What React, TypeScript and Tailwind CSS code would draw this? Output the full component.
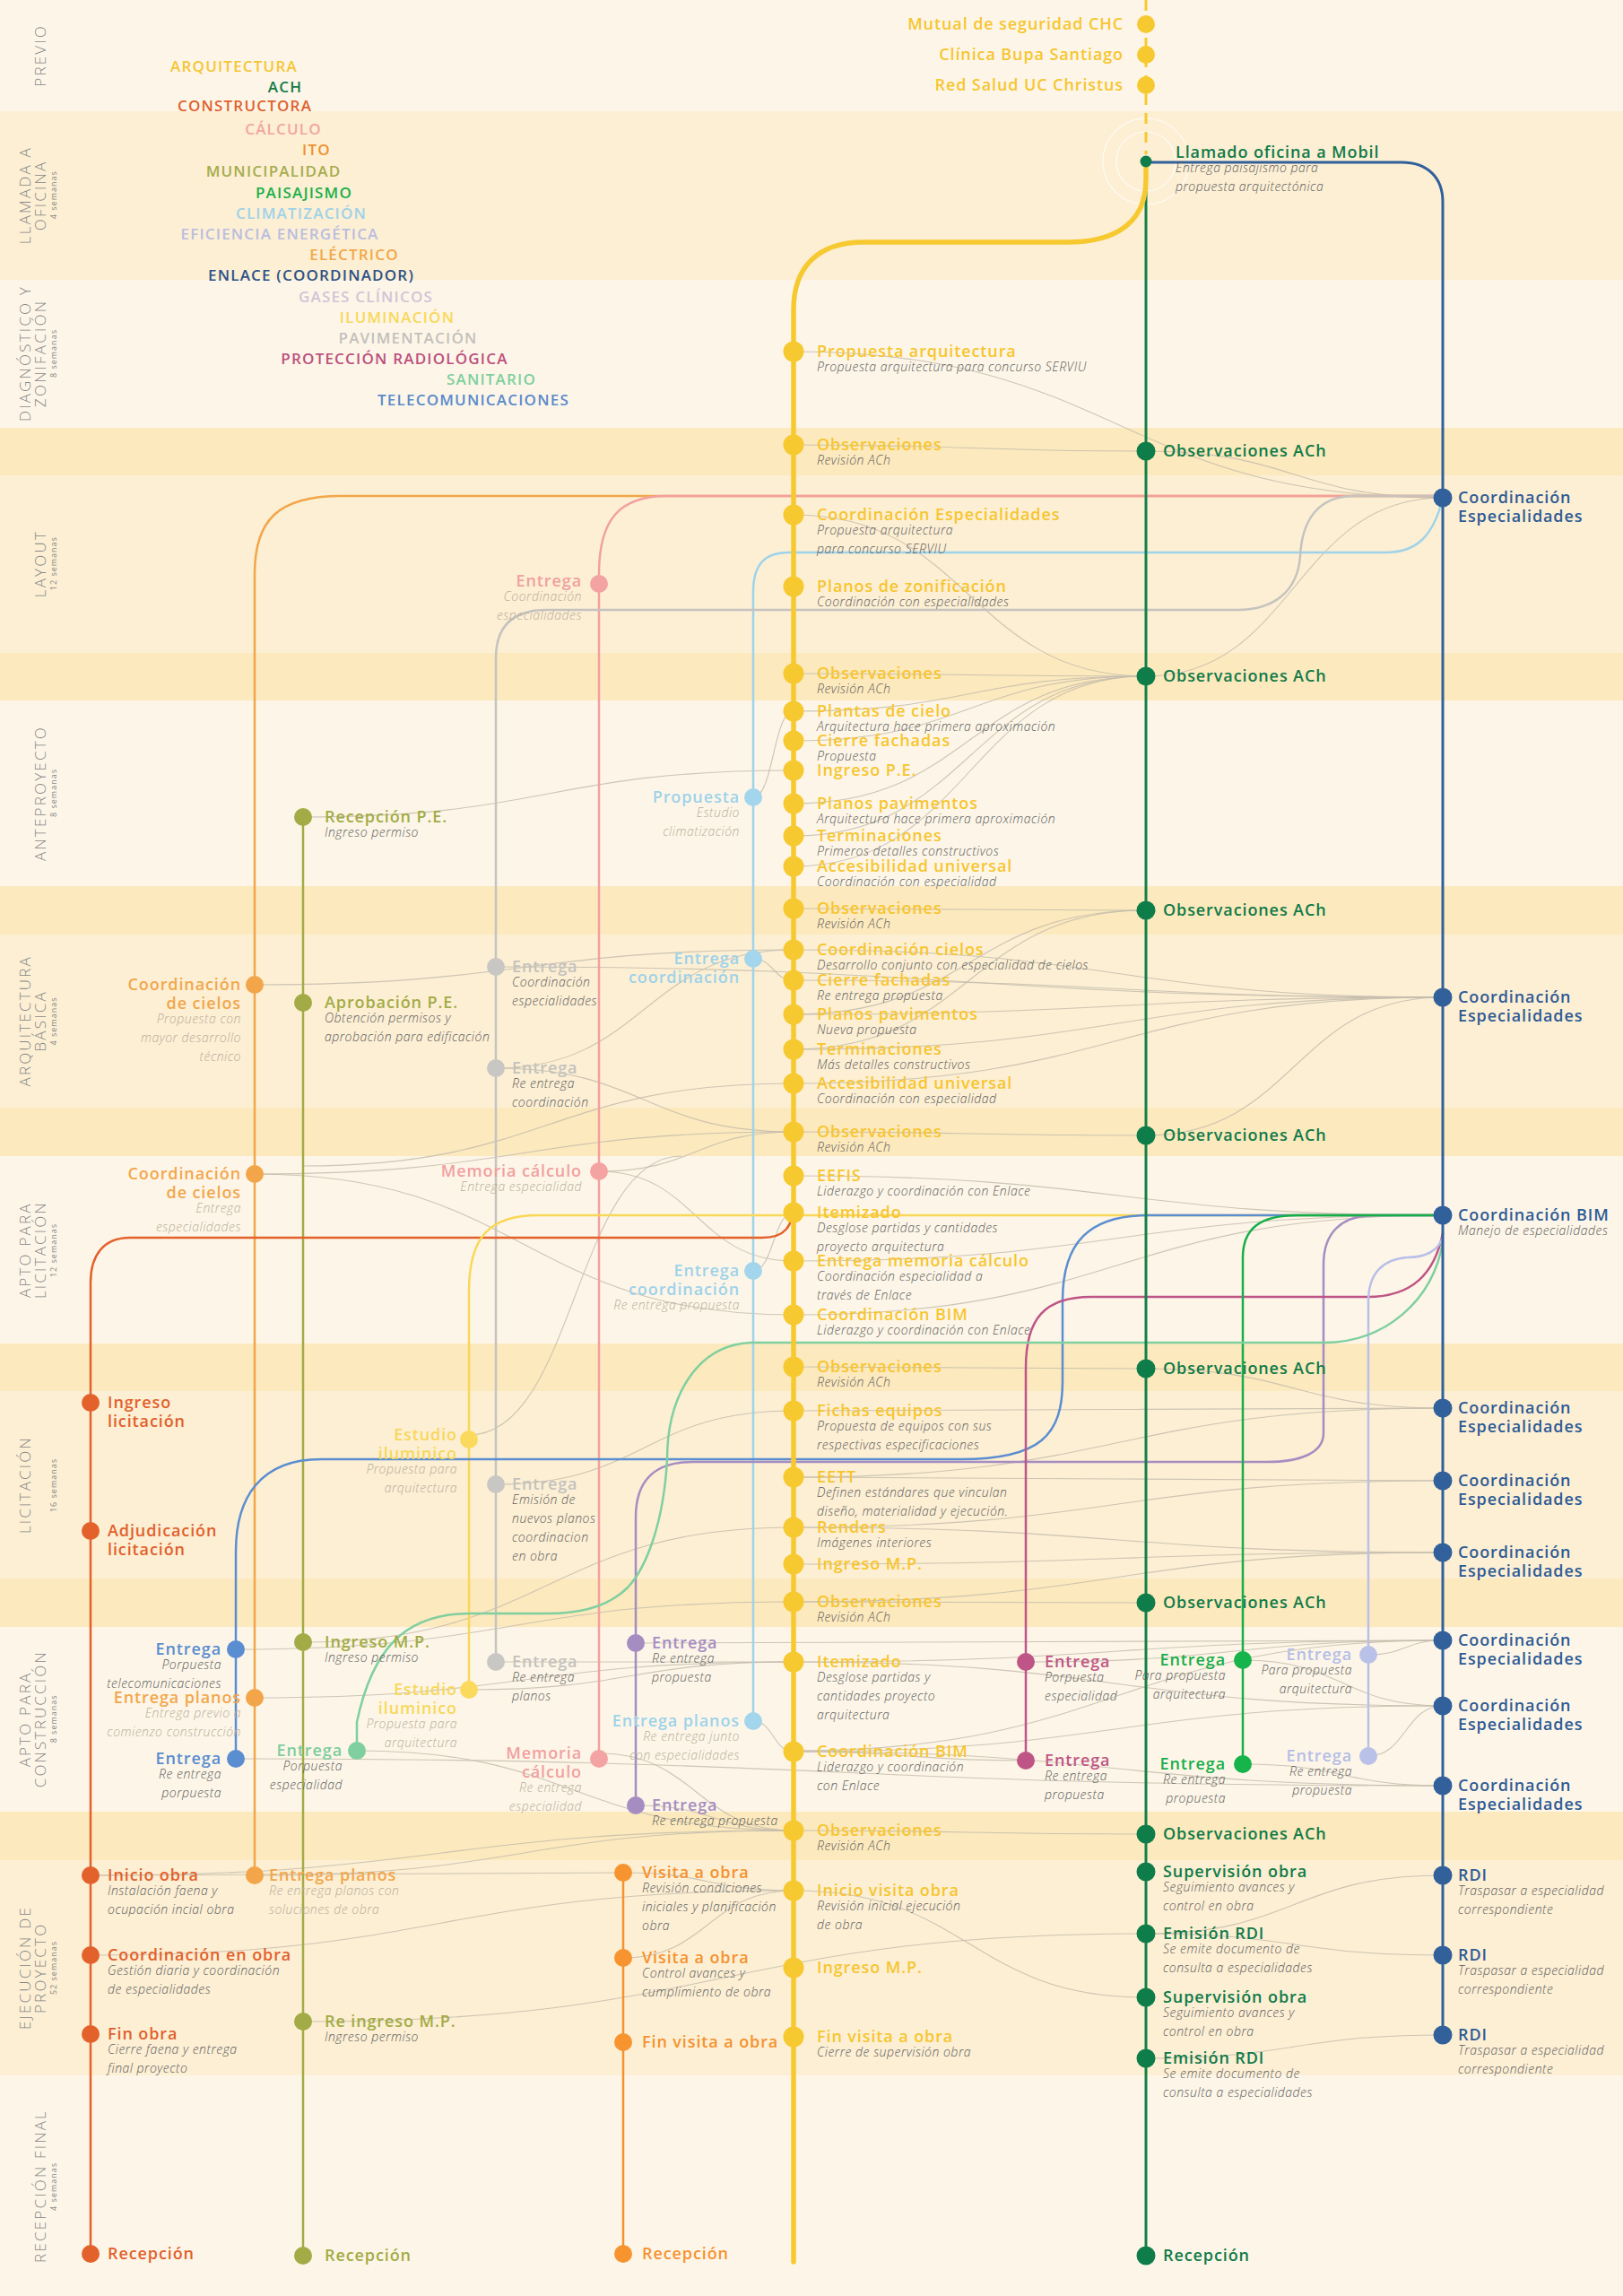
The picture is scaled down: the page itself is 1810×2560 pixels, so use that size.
import React from 'react';

type Band = { h: string; bg: string; label?: string[]; sub?: string };
type Lab = { x: number; y: number; t: string; s?: string; c: string; sc?: string; r?: boolean };

const LIGHT = 'bg-[#fdf6e8]';
const MID = 'bg-[#fcefd4]';
const DARK = 'bg-[#fce9bd]';

const BANDS: Band[] = [
  { h: 'h-[124px]', bg: LIGHT, label: ['PREVIO'] },
  { h: 'h-[188px]', bg: MID, label: ['LLAMADA A', 'OFICINA'], sub: '4 semanas' },
  { h: 'h-[165px]', bg: LIGHT, label: ['DIAGNÓSTICO Y', 'ZONIFACIÓN'], sub: '8 semanas' },
  { h: 'h-[53px]', bg: DARK },
  { h: 'h-[198px]', bg: MID, label: ['LAYOUT'], sub: '12 semanas' },
  { h: 'h-[53px]', bg: DARK },
  { h: 'h-[207px]', bg: LIGHT, label: ['ANTEPROYECTO'], sub: '8 semanas' },
  { h: 'h-[54px]', bg: DARK },
  { h: 'h-[193px]', bg: MID, label: ['ARQUITECTURA', 'BÁSICA'], sub: '4 semanas' },
  { h: 'h-[54px]', bg: DARK },
  { h: 'h-[209px]', bg: LIGHT, label: ['APTO PARA', 'LICITACIÓN'], sub: '12 semanas' },
  { h: 'h-[53px]', bg: DARK },
  { h: 'h-[209px]', bg: MID, label: ['LICITACIÓN', '\u00a0'], sub: '16 semanas' },
  { h: 'h-[54px]', bg: DARK },
  { h: 'h-[206px]', bg: LIGHT, label: ['APTO PARA', 'CONSTRUCCIÓN'], sub: '8 semanas' },
  { h: 'h-[54px]', bg: DARK },
  { h: 'h-[240px]', bg: MID, label: ['EJECUCIÓN DE', 'PROYECTO'], sub: '52 semanas' },
  { h: 'h-[246px]', bg: LIGHT, label: ['RECEPCIÓN FINAL'], sub: '4 semanas' },
];

const LEGEND: [string, number, number, string][] = [
  ['ARQUITECTURA', 261, 74, 'text-[#f6c535]'],
  ['ACH', 318, 97, 'text-[#137a47]'],
  ['CONSTRUCTORA', 273, 118, 'text-[#e0612c]'],
  ['CÁLCULO', 316, 144, 'text-[#f2a5a0]'],
  ['ITO', 353, 167, 'text-[#f0912f]'],
  ['MUNICIPALIDAD', 305, 191, 'text-[#a6ac4d]'],
  ['PAISAJISMO', 339, 215, 'text-[#1aaf4b]'],
  ['CLIMATIZACIÓN', 336, 238, 'text-[#9fd2e8]'],
  ['EFICIENCIA ENERGÉTICA', 312, 261, 'text-[#b9bde0]'],
  ['ELÉCTRICO', 395, 284, 'text-[#f2a748]'],
  ['ENLACE (COORDINADOR)', 347, 307, 'text-[#2c5287]'],
  ['GASES CLÍNICOS', 408, 331, 'text-[#d3c4d6]'],
  ['ILUMINACIÓN', 443, 354, 'text-[#f9d85b]'],
  ['PAVIMENTACIÓN', 455, 377, 'text-[#c3c0bb]'],
  ['PROTECCIÓN RADIOLÓGICA', 440, 400, 'text-[#bc4f7e]'],
  ['SANITARIO', 548, 423, 'text-[#7dcf9e]'],
  ['TELECOMUNICACIONES', 528, 446, 'text-[#5a8acb]'],
];

const Y = 'text-[#f7c52f]';
const G = 'text-[#107a48]';
const B = 'text-[#2f5b94]';
const LT = 'text-[#b9ad9b]';

const yellowNodes: [number, string, string?][] = [
  [392, 'Propuesta arquitectura', 'Propuesta arquitectura para concurso SERVIU'],
  [496, 'Observaciones', 'Revisión ACh'],
  [574, 'Coordinación Especialidades', 'Propuesta arquitectura|para concurso SERVIU'],
  [654, 'Planos de zonificación', 'Coordinación con especialidades'],
  [751, 'Observaciones', 'Revisión ACh'],
  [793, 'Plantas de cielo', 'Arquitectura hace primera aproximación'],
  [826, 'Cierre fachadas', 'Propuesta'],
  [859, 'Ingreso P.E.'],
  [896, 'Planos pavimentos', 'Arquitectura hace primera aproximación'],
  [932, 'Terminaciones', 'Primeros detalles constructivos'],
  [966, 'Accesibilidad universal', 'Coordinación con especialidad'],
  [1013, 'Observaciones', 'Revisión ACh'],
  [1059, 'Coordinación cielos', 'Desarrollo conjunto con especialidad de cielos'],
  [1093, 'Cierre fachadas', 'Re entrega propuesta'],
  [1131, 'Planos pavimentos', 'Nueva propuesta'],
  [1170, 'Terminaciones', 'Más detalles constructivos'],
  [1208, 'Accesibilidad universal', 'Coordinación con especialidad'],
  [1262, 'Observaciones', 'Revisión ACh'],
  [1311, 'EEFIS', 'Liderazgo y coordinación con Enlace'],
  [1352, 'Itemizado', 'Desglose partidas y cantidades|proyecto arquitectura'],
  [1406, 'Entrega memoria cálculo', 'Coordinación especialidad a|través de Enlace'],
  [1466, 'Coordinación BIM', 'Liderazgo y coordinación con Enlace'],
  [1524, 'Observaciones', 'Revisión ACh'],
  [1573, 'Fichas equipos', 'Propuesta de equipos con sus|respectivas especificaciones'],
  [1647, 'EETT', 'Definen estándares que vinculan|diseño, materialidad y ejecución.'],
  [1703, 'Renders', 'Imágenes interiores'],
  [1744, 'Ingreso M.P.'],
  [1786, 'Observaciones', 'Revisión ACh'],
  [1853, 'Itemizado', 'Desglose partidas y|cantidades proyecto|arquitectura'],
  [1953, 'Coordinación BIM', 'Liderazgo y coordinación|con Enlace'],
  [2041, 'Observaciones', 'Revisión ACh'],
  [2108, 'Inicio visita obra', 'Revisión inicial ejecución|de obra'],
  [2194, 'Ingreso M.P.'],
  [2271, 'Fin visita a obra', 'Cierre de supervisión obra'],
];

const achNodes: [number, string, string?][] = [
  [503, 'Observaciones ACh'],
  [754, 'Observaciones ACh'],
  [1015, 'Observaciones ACh'],
  [1266, 'Observaciones ACh'],
  [1526, 'Observaciones ACh'],
  [1787, 'Observaciones ACh'],
  [2045, 'Observaciones ACh'],
  [2087, 'Supervisión obra', 'Seguimiento avances y|control en obra'],
  [2156, 'Emisión RDI', 'Se emite documento de|consulta a especialidades'],
  [2227, 'Supervisión obra', 'Seguimiento avances y|control en obra'],
  [2295, 'Emisión RDI', 'Se emite documento de|consulta a especialidades'],
  [2515, 'Recepción'],
];

const CE = 'Coordinación\nEspecialidades';
const enlaceNodes: [number, string, string?][] = [
  [555, CE], [1112, CE], [1355, 'Coordinación BIM', 'Manejo de especialidades'],
  [1570, CE], [1651, CE], [1731, CE], [1829, CE], [1902, CE], [1991, CE],
  [2091, 'RDI', 'Traspasar a especialidad|correspondiente'],
  [2180, 'RDI', 'Traspasar a especialidad|correspondiente'],
  [2269, 'RDI', 'Traspasar a especialidad|correspondiente'],
];

const LABELS: Lab[] = [
  ...yellowNodes.map(([y, t, s]) => ({ x: 911, y, t, s, c: Y })),
  ...achNodes.map(([y, t, s]) => ({ x: 1297, y, t, s, c: G })),
  ...enlaceNodes.map(([y, t, s]) => ({ x: 1626, y, t, s, c: B })),
  { x: 1253, y: 27, t: 'Mutual de seguridad CHC', c: Y, r: true },
  { x: 1253, y: 61, t: 'Clínica Bupa Santiago', c: Y, r: true },
  { x: 1253, y: 95, t: 'Red Salud UC Christus', c: Y, r: true },
  { x: 1311, y: 170, t: 'Llamado oficina a Mobil', s: 'Entrega paisajismo para|propuesta arquitectónica', c: G },
  // constructora
  { x: 120, y: 1564, t: 'Ingreso\nlicitación', c: 'text-[#e2602b]' },
  { x: 120, y: 1707, t: 'Adjudicación\nlicitación', c: 'text-[#e2602b]' },
  { x: 120, y: 2091, t: 'Inicio obra', s: 'Instalación faena y|ocupación incial obra', c: 'text-[#e2602b]' },
  { x: 120, y: 2180, t: 'Coordinación en obra', s: 'Gestión diaria y coordinación|de especialidades', c: 'text-[#e2602b]' },
  { x: 120, y: 2268, t: 'Fin obra', s: 'Cierre faena y entrega|final proyecto', c: 'text-[#e2602b]' },
  { x: 120, y: 2513, t: 'Recepción', c: 'text-[#e2602b]' },
  // eléctrico
  { x: 269, y: 1098, t: 'Coordinación\nde cielos', s: 'Propuesta con|mayor desarrollo|técnico', c: 'text-[#f2a64c]', sc: LT, r: true },
  { x: 269, y: 1309, t: 'Coordinación\nde cielos', s: 'Entrega|especialidades', c: 'text-[#f2a64c]', sc: LT, r: true },
  { x: 269, y: 1893, t: 'Entrega planos', s: 'Entrega previo a|comienzo construcción', c: 'text-[#f2a64c]', sc: LT, r: true },
  { x: 300, y: 2091, t: 'Entrega planos', s: 'Re entrega planos con|soluciones de obra', c: 'text-[#f2a64c]', sc: LT },
  // municipalidad
  { x: 362, y: 911, t: 'Recepción P.E.', s: 'Ingreso permiso', c: 'text-[#a2ab45]' },
  { x: 362, y: 1118, t: 'Aprobación P.E.', s: 'Obtención permisos y|aprobación para edificación', c: 'text-[#a2ab45]' },
  { x: 362, y: 1831, t: 'Ingreso M.P.', s: 'Ingreso permiso', c: 'text-[#a2ab45]' },
  { x: 362, y: 2254, t: 'Re ingreso M.P.', s: 'Ingreso permiso', c: 'text-[#a2ab45]' },
  { x: 362, y: 2515, t: 'Recepción', c: 'text-[#a2ab45]' },
  // telecomunicaciones
  { x: 247, y: 1839, t: 'Entrega', s: 'Porpuesta|telecomunicaciones', c: 'text-[#5a8dd0]', r: true },
  { x: 247, y: 1961, t: 'Entrega', s: 'Re entrega|porpuesta', c: 'text-[#5a8dd0]', r: true },
  // pavimentación
  { x: 571, y: 1078, t: 'Entrega', s: 'Coordinación|especialidades', c: 'text-[#c4c2bd]' },
  { x: 571, y: 1191, t: 'Entrega', s: 'Re entrega|coordinación', c: 'text-[#c4c2bd]' },
  { x: 571, y: 1655, t: 'Entrega', s: 'Emisión de|nuevos planos|coordinacion|en obra', c: 'text-[#c4c2bd]' },
  { x: 571, y: 1853, t: 'Entrega', s: 'Re entrega|planos', c: 'text-[#c4c2bd]' },
  // cálculo
  { x: 649, y: 648, t: 'Entrega', s: 'Coordinación|especialidades', c: 'text-[#f1a0a0]', sc: LT, r: true },
  { x: 649, y: 1306, t: 'Memoria cálculo', s: 'Entrega especialidad', c: 'text-[#f1a0a0]', sc: LT, r: true },
  { x: 649, y: 1955, t: 'Memoria\ncálculo', s: 'Re entrega|especialidad', c: 'text-[#f1a0a0]', sc: LT, r: true },
  // iluminación
  { x: 510, y: 1600, t: 'Estudio\niluminico', s: 'Propuesta para|arquitectura', c: 'text-[#f8d75a]', sc: LT, r: true },
  { x: 510, y: 1884, t: 'Estudio\niluminico', s: 'Propuesta para|arquitectura', c: 'text-[#f8d75a]', sc: LT, r: true },
  // climatización
  { x: 825, y: 889, t: 'Propuesta', s: 'Estudio|climatización', c: 'text-[#9ed2ea]', sc: LT, r: true },
  { x: 825, y: 1069, t: 'Entrega\ncoordinación', c: 'text-[#9ed2ea]', r: true },
  { x: 825, y: 1417, t: 'Entrega\ncoordinación', s: 'Re entrega propuesta', c: 'text-[#9ed2ea]', sc: LT, r: true },
  { x: 825, y: 1919, t: 'Entrega planos', s: 'Re entrega junto|con especialidades', c: 'text-[#9ed2ea]', sc: LT, r: true },
  // gases
  { x: 727, y: 1832, t: 'Entrega', s: 'Re entrega|propuesta', c: 'text-[#a58dc2]' },
  { x: 727, y: 2013, t: 'Entrega', s: 'Re entrega propuesta', c: 'text-[#a58dc2]' },
  // sanitario
  { x: 382, y: 1952, t: 'Entrega', s: 'Porpuesta|especialidad', c: 'text-[#7ccd9d]', r: true },
  // radiológica
  { x: 1165, y: 1853, t: 'Entrega', s: 'Porpuesta|especialidad', c: 'text-[#bf5686]' },
  { x: 1165, y: 1963, t: 'Entrega', s: 'Re entrega|propuesta', c: 'text-[#bf5686]' },
  // paisajismo
  { x: 1367, y: 1851, t: 'Entrega', s: 'Para propuesta|arquitectura', c: 'text-[#19ae4b]', r: true },
  { x: 1367, y: 1967, t: 'Entrega', s: 'Re entrega|propuesta', c: 'text-[#19ae4b]', r: true },
  // eficiencia
  { x: 1508, y: 1845, t: 'Entrega', s: 'Para propuesta|arquitectura', c: 'text-[#b5bde6]', r: true },
  { x: 1508, y: 1958, t: 'Entrega', s: 'Re entrega|propuesta', c: 'text-[#b5bde6]', r: true },
  // ito
  { x: 716, y: 2088, t: 'Visita a obra', s: 'Revisión condiciones|iniciales y planificación|obra', c: 'text-[#f5922f]' },
  { x: 716, y: 2183, t: 'Visita a obra', s: 'Control avances y|cumplimiento de obra', c: 'text-[#f5922f]' },
  { x: 716, y: 2277, t: 'Fin visita a obra', c: 'text-[#f5922f]' },
  { x: 716, y: 2513, t: 'Recepción', c: 'text-[#f5922f]' },
];

const LINES: { d: string; c: string; w: number }[] = [
  { d: 'M1609,553 L380,553 C310,553 284,580 284,640 L284,2091', c: '#f2a649', w: 2.5 },
  { d: 'M1609,553 L744,553 C690,553 668,580 668,640 L668,1955', c: '#f2a0a0', w: 2.5 },
  { d: 'M1609,556 C1598,598 1580,616 1545,616 L880,616 C852,616 840,630 840,660 L840,1919', c: '#9fd3ea', w: 2.5 },
  { d: 'M1609,553 L1510,553 C1470,553 1452,580 1450,620 C1447,660 1420,680 1380,680 L610,680 C570,680 553,700 553,734 L553,1853', c: '#c5c3bf', w: 2.5 },
  { d: 'M338,911 L338,2515', c: '#a2ab45', w: 2.5 },
  { d: 'M885,1340 C885,1368 875,1380 850,1380 L145,1380 C115,1380 101,1400 101,1430 L101,2513', c: '#e3612b', w: 2.5 },
  { d: 'M1609,1355 L600,1355 C545,1355 523,1380 523,1440 L523,1884', c: '#f9d757', w: 2.5 },
  { d: 'M1609,1355 L1280,1355 C1215,1355 1185,1385 1185,1450 L1185,1540 C1185,1600 1160,1627 1072,1627 L358,1627 C290,1627 263,1670 263,1730 L263,1961', c: '#5b8ed0', w: 2.5 },
  { d: 'M1609,1355 L1534,1355 C1495,1355 1476,1375 1476,1410 L1476,1598 C1476,1620 1450,1630 1413,1630 L773,1630 C730,1630 709,1650 709,1692 L709,2013', c: '#a58dc2', w: 2.5 },
  { d: 'M1609,1375 C1600,1420 1575,1446 1525,1446 L1217,1446 C1165,1446 1144,1470 1144,1525 L1144,1963', c: '#be5586', w: 2.5 },
  { d: 'M1609,1355 L1447,1355 C1405,1355 1386,1370 1386,1402 L1386,1967', c: '#17ae4a', w: 2.5 },
  { d: 'M1609,1380 C1603,1396 1588,1402 1569,1402 C1542,1404 1526,1420 1526,1451 L1526,1958', c: '#b9c0e7', w: 2.5 },
  { d: 'M1609,1385 C1598,1450 1545,1497 1476,1497 L837,1497 C775,1500 744,1560 744,1627 C740,1700 720,1749 700,1770 C680,1790 650,1799 612,1799 L525,1799 C450,1799 415,1840 398,1920 L398,1952', c: '#80cfa0', w: 2.5 },
  { d: 'M695,2088 L695,2513', c: '#f5922f', w: 2.5 },
];

const CONN: number[][] = [
  [885, 392, 1609, 555], [885, 496, 1278, 503], [1278, 503, 1609, 555], [885, 574, 1278, 754],
  [1278, 754, 1609, 555], [885, 751, 1278, 754], [885, 793, 1278, 754], [885, 826, 1278, 754],
  [885, 896, 1278, 754], [885, 932, 1278, 754], [885, 966, 1278, 754], [338, 911, 885, 859],
  [840, 889, 885, 793], [885, 1013, 1278, 1015], [885, 1059, 1609, 1112], [885, 1093, 1609, 1112],
  [885, 1131, 1609, 1112], [885, 1170, 1609, 1112], [885, 1208, 1609, 1112], [1278, 1015, 885, 1131],
  [1278, 1015, 885, 1170], [284, 1098, 885, 1059], [553, 1078, 1609, 1112], [553, 1191, 885, 1059],
  [840, 1069, 885, 1093], [553, 1191, 885, 1262], [885, 1262, 1278, 1266], [1609, 1112, 1278, 1266],
  [338, 1300, 885, 1208], [885, 1311, 1609, 1355], [885, 1406, 1609, 1355], [885, 1466, 1609, 1355],
  [284, 1309, 885, 1466], [284, 1309, 885, 1262], [668, 1306, 885, 1262], [668, 1306, 885, 1406],
  [840, 1417, 885, 1352], [523, 1600, 760, 1289], [885, 1524, 1278, 1526], [885, 1573, 1609, 1570],
  [885, 1647, 1609, 1651], [885, 1703, 1609, 1731], [885, 1744, 1609, 1731], [885, 1786, 1278, 1787],
  [1278, 1526, 1609, 1570], [553, 1655, 885, 1573], [885, 1647, 1609, 1570], [885, 1703, 1609, 1651],
  [338, 1831, 885, 1703], [885, 1786, 1609, 1731], [885, 1853, 1609, 1829], [885, 1853, 1609, 1902],
  [885, 1953, 1609, 1902], [885, 1953, 1609, 1991], [263, 1839, 885, 1786], [284, 1893, 885, 1853],
  [263, 1961, 1609, 1991], [398, 1952, 885, 2041], [523, 1884, 885, 1853], [553, 1853, 885, 1853],
  [709, 1832, 1609, 1829], [1144, 1853, 1609, 1829], [1386, 1851, 1609, 1902], [1526, 1845, 1609, 1829],
  [1386, 1967, 1609, 1991], [1526, 1958, 1609, 1902], [1144, 1963, 885, 1953], [840, 1919, 885, 1953],
  [668, 1955, 885, 2041], [709, 2013, 885, 2041], [885, 2041, 1278, 2045], [101, 2091, 885, 2041],
  [101, 2180, 885, 2108], [284, 2091, 885, 2041], [338, 2254, 1278, 2156], [695, 2088, 885, 2108],
  [695, 2183, 885, 2108], [885, 2108, 1278, 2227], [1278, 2156, 1609, 2091], [1278, 2156, 1609, 2180],
  [1278, 2295, 1609, 2269], [101, 2091, 695, 2088], [885, 1952, 1609, 1829],
];

const DOTS: [number, number, string, number?][] = [
  ...yellowNodes.map(([y]) => [885, y, '#f7c930', 11.5] as [number, number, string, number]),
  [1278, 27, '#f7c930', 10], [1278, 61, '#f7c930', 10], [1278, 95, '#f7c930', 10],
  ...achNodes.map(([y]) => [1278, y, '#0f7d49', 10.5] as [number, number, string, number]),
  ...enlaceNodes.map(([y]) => [1609, y, '#31609b', 10.5] as [number, number, string, number]),
  [101, 1564, '#e3612b'], [101, 1707, '#e3612b'], [101, 2091, '#e3612b'], [101, 2180, '#e3612b'], [101, 2268, '#e3612b'], [101, 2513, '#e3612b'],
  [284, 1098, '#f2a649'], [284, 1309, '#f2a649'], [284, 1893, '#f2a649'], [284, 2091, '#f2a649'],
  [338, 911, '#a2ab45'], [338, 1118, '#a2ab45'], [338, 1831, '#a2ab45'], [338, 2254, '#a2ab45'], [338, 2515, '#a2ab45'],
  [263, 1839, '#5b8ed0'], [263, 1961, '#5b8ed0'],
  [553, 1078, '#c9c7c3'], [553, 1191, '#c9c7c3'], [553, 1655, '#c9c7c3'], [553, 1853, '#c9c7c3'],
  [668, 651, '#f4a3a3'], [668, 1306, '#f4a3a3'], [668, 1961, '#f4a3a3'],
  [523, 1605, '#fbd95c'], [523, 1884, '#fbd95c'],
  [840, 889, '#a3d5ec'], [840, 1069, '#a3d5ec'], [840, 1417, '#a3d5ec'], [840, 1919, '#a3d5ec'],
  [709, 1832, '#a58dc2'], [709, 2013, '#a58dc2'],
  [398, 1952, '#80cfa0'],
  [1144, 1853, '#be5586'], [1144, 1963, '#be5586'],
  [1386, 1851, '#17b44c'], [1386, 1967, '#17b44c'],
  [1526, 1845, '#bac1e8'], [1526, 1958, '#bac1e8'],
  [695, 2088, '#f7942f'], [695, 2183, '#f7942f'], [695, 2277, '#f7942f'], [695, 2513, '#f7942f'],
];

const curve = ([x1, y1, x2, y2]: number[]) => {
  const mx = (x1 + x2) / 2;
  return `M${x1},${y1} C${mx},${y1} ${mx},${y2} ${x2},${y2}`;
};

function PhaseLabel({ b }: { b: Band }) {
  if (!b.label) return null;
  return (
    <div className="[writing-mode:vertical-rl] rotate-180 text-center text-[#878787]">
      {b.label.map((l, i) => (
        <div key={i} className="text-[17px] font-light leading-[17px] tracking-[2.2px]">{l}</div>
      ))}
      <div className="text-[9px] leading-[13px] tracking-[1px]">{b.sub ?? '\u00a0'}</div>
    </div>
  );
}

function Label({ l }: { l: Lab }) {
  const pos = l.r ? { right: 1810 - l.x, top: l.y - 11 } : { left: l.x, top: l.y - 11 };
  return (
    <div className={`absolute whitespace-pre ${l.r ? 'text-right' : 'text-left'}`} style={pos}>
      <div className={`text-[18px] font-semibold leading-[21px] tracking-[0.9px] ${l.c}`}>{l.t}</div>
      {l.s && (
        <div className={`-mt-[4px] text-[14px] italic font-light leading-[21px] tracking-[0.5px] ${l.sc ?? 'text-[#5c5c5c]'}`}>
          {l.s.split('|').join('\n')}
        </div>
      )}
    </div>
  );
}

export default function App() {
  return (
    <div className="relative w-[1810px] h-[2560px] overflow-hidden font-['Open_Sans','Noto_Sans',sans-serif]">
      {BANDS.map((b, i) => (
        <div key={i} className={`flex ${b.h} ${b.bg}`}>
          <div className="flex w-[66px] items-center justify-end">
            <PhaseLabel b={b} />
          </div>
        </div>
      ))}

      <svg className="absolute inset-0" width={1810} height={2560} viewBox="0 0 1810 2560" fill="none">
        {CONN.map((c, i) => (
          <path key={i} d={curve(c)} stroke="#c4bcab" strokeWidth={1.1} opacity={0.85} />
        ))}
        <circle cx={1278} cy={180} r={48} stroke="#ffffff" strokeWidth={1.2} opacity={0.8} />
        <circle cx={1278} cy={180} r={33} stroke="#ffffff" strokeWidth={1.2} opacity={0.8} />
        <path d="M1278,0 L1278,172" stroke="#f7c930" strokeWidth={3} strokeDasharray="12 9" />
        {LINES.map((l, i) => (
          <path key={i} d={l.d} stroke={l.c} strokeWidth={l.w} strokeLinecap="round" strokeLinejoin="round" />
        ))}
        <path d="M1278,180 L1278,2515" stroke="#128049" strokeWidth={3} />
        <path d="M1284,181 L1563,181 C1592,181 1609,198 1609,225 L1609,2269" stroke="#31609b" strokeWidth={3} />
        <path d="M1278,180 L1278,200 C1278,248 1245,270 1190,270 L963,270 C912,270 885,298 885,345 L885,2522" stroke="#f7c930" strokeWidth={5.5} strokeLinecap="round" />
        {DOTS.map(([x, y, c, r], i) => (
          <circle key={i} cx={x} cy={y} r={r ?? 10} fill={c} />
        ))}
        <circle cx={1278} cy={180} r={6.5} fill="#0f7d49" />
      </svg>

      {LEGEND.map(([t, x, y, c]) => (
        <div
          key={t}
          className={`absolute -translate-x-1/2 -translate-y-1/2 whitespace-nowrap text-[17px] font-semibold tracking-[1.2px] ${c}`}
          style={{ left: x, top: y }}
        >
          {t}
        </div>
      ))}

      {LABELS.map((l, i) => (
        <Label key={i} l={l} />
      ))}
    </div>
  );
}
